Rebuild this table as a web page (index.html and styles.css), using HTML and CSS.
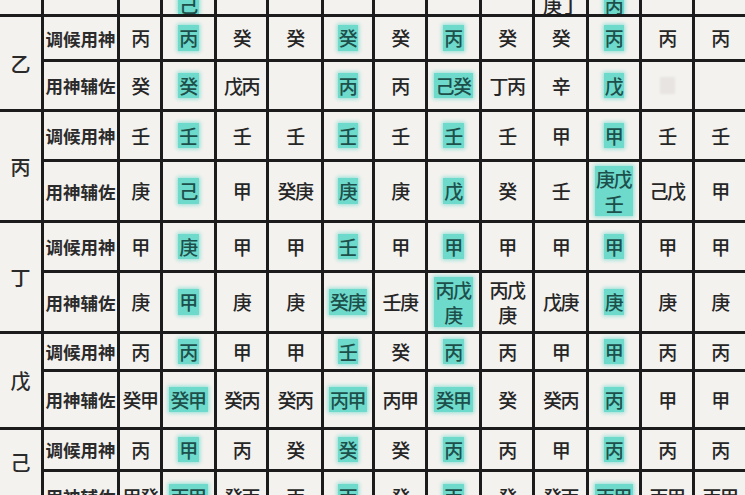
FILE: index.html
```html
<!DOCTYPE html>
<html lang="zh">
<head>
<meta charset="utf-8">
<title>调候用神表</title>
<link rel="stylesheet" href="styles.css">
</head>
<body>
<div class="table">
  <!-- 甲 (partial, cut off at top) -->
  <div class="stem r0"></div>
  <div class="label r0"></div>
  <div class="cell r0"></div>
  <div class="cell r0"><span class="hl">己</span></div>
  <div class="cell r0"></div>
  <div class="cell r0"></div>
  <div class="cell r0"></div>
  <div class="cell r0"></div>
  <div class="cell r0"></div>
  <div class="cell r0"></div>
  <div class="cell r0">庚丁</div>
  <div class="cell r0"><span class="hl">丙</span></div>
  <div class="cell r0"></div>
  <div class="cell r0"></div>

  <!-- 乙 -->
  <div class="stem">乙</div>
  <div class="label r1">调候用神</div>
  <div class="cell r1">丙</div>
  <div class="cell r1"><span class="hl">丙</span></div>
  <div class="cell r1">癸</div>
  <div class="cell r1">癸</div>
  <div class="cell r1"><span class="hl">癸</span></div>
  <div class="cell r1">癸</div>
  <div class="cell r1"><span class="hl">丙</span></div>
  <div class="cell r1">癸</div>
  <div class="cell r1">癸</div>
  <div class="cell r1"><span class="hl">丙</span></div>
  <div class="cell r1">丙</div>
  <div class="cell r1">丙</div>
  <div class="label r2">用神辅佐</div>
  <div class="cell r2">癸</div>
  <div class="cell r2"><span class="hl">癸</span></div>
  <div class="cell r2">戊丙</div>
  <div class="cell r2"></div>
  <div class="cell r2"><span class="hl">丙</span></div>
  <div class="cell r2">丙</div>
  <div class="cell r2"><span class="hl">己癸</span></div>
  <div class="cell r2">丁丙</div>
  <div class="cell r2">辛</div>
  <div class="cell r2"><span class="hl">戊</span></div>
  <div class="cell r2"><span class="ghost"></span></div>
  <div class="cell r2"></div>

  <!-- 丙 -->
  <div class="stem">丙</div>
  <div class="label r3">调候用神</div>
  <div class="cell r3">壬</div>
  <div class="cell r3"><span class="hl">壬</span></div>
  <div class="cell r3">壬</div>
  <div class="cell r3">壬</div>
  <div class="cell r3"><span class="hl">壬</span></div>
  <div class="cell r3">壬</div>
  <div class="cell r3"><span class="hl">壬</span></div>
  <div class="cell r3">壬</div>
  <div class="cell r3">甲</div>
  <div class="cell r3"><span class="hl">甲</span></div>
  <div class="cell r3">壬</div>
  <div class="cell r3">壬</div>
  <div class="label r4">用神辅佐</div>
  <div class="cell r4">庚</div>
  <div class="cell r4"><span class="hl">己</span></div>
  <div class="cell r4">甲</div>
  <div class="cell r4">癸庚</div>
  <div class="cell r4"><span class="hl">庚</span></div>
  <div class="cell r4">庚</div>
  <div class="cell r4"><span class="hl">戊</span></div>
  <div class="cell r4">癸</div>
  <div class="cell r4">壬</div>
  <div class="cell r4"><span class="hl">庚戊<br>壬</span></div>
  <div class="cell r4">己戊</div>
  <div class="cell r4">甲</div>

  <!-- 丁 -->
  <div class="stem">丁</div>
  <div class="label r5">调候用神</div>
  <div class="cell r5">甲</div>
  <div class="cell r5"><span class="hl">庚</span></div>
  <div class="cell r5">甲</div>
  <div class="cell r5">甲</div>
  <div class="cell r5"><span class="hl">壬</span></div>
  <div class="cell r5">甲</div>
  <div class="cell r5"><span class="hl">甲</span></div>
  <div class="cell r5">甲</div>
  <div class="cell r5">甲</div>
  <div class="cell r5"><span class="hl">甲</span></div>
  <div class="cell r5">甲</div>
  <div class="cell r5">甲</div>
  <div class="label r6">用神辅佐</div>
  <div class="cell r6">庚</div>
  <div class="cell r6"><span class="hl">甲</span></div>
  <div class="cell r6">庚</div>
  <div class="cell r6">庚</div>
  <div class="cell r6"><span class="hl">癸庚</span></div>
  <div class="cell r6">壬庚</div>
  <div class="cell r6"><span class="hl">丙戊<br>庚</span></div>
  <div class="cell r6">丙戊<br>庚</div>
  <div class="cell r6">戊庚</div>
  <div class="cell r6"><span class="hl">庚</span></div>
  <div class="cell r6">庚</div>
  <div class="cell r6">庚</div>

  <!-- 戊 -->
  <div class="stem">戊</div>
  <div class="label r7">调候用神</div>
  <div class="cell r7">丙</div>
  <div class="cell r7"><span class="hl">丙</span></div>
  <div class="cell r7">甲</div>
  <div class="cell r7">甲</div>
  <div class="cell r7"><span class="hl">壬</span></div>
  <div class="cell r7">癸</div>
  <div class="cell r7"><span class="hl">丙</span></div>
  <div class="cell r7">丙</div>
  <div class="cell r7">甲</div>
  <div class="cell r7"><span class="hl">甲</span></div>
  <div class="cell r7">丙</div>
  <div class="cell r7">丙</div>
  <div class="label r8">用神辅佐</div>
  <div class="cell r8">癸甲</div>
  <div class="cell r8"><span class="hl">癸甲</span></div>
  <div class="cell r8">癸丙</div>
  <div class="cell r8">癸丙</div>
  <div class="cell r8"><span class="hl">丙甲</span></div>
  <div class="cell r8">丙甲</div>
  <div class="cell r8"><span class="hl">癸甲</span></div>
  <div class="cell r8">癸</div>
  <div class="cell r8">癸丙</div>
  <div class="cell r8"><span class="hl">丙</span></div>
  <div class="cell r8">甲</div>
  <div class="cell r8">甲</div>

  <!-- 己 -->
  <div class="stem">己</div>
  <div class="label r9">调候用神</div>
  <div class="cell r9">丙</div>
  <div class="cell r9"><span class="hl">甲</span></div>
  <div class="cell r9">丙</div>
  <div class="cell r9">癸</div>
  <div class="cell r9"><span class="hl">癸</span></div>
  <div class="cell r9">癸</div>
  <div class="cell r9"><span class="hl">丙</span></div>
  <div class="cell r9">丙</div>
  <div class="cell r9">甲</div>
  <div class="cell r9"><span class="hl">丙</span></div>
  <div class="cell r9">丙</div>
  <div class="cell r9">丙</div>
  <div class="label r10">用神辅佐</div>
  <div class="cell r10">甲癸</div>
  <div class="cell r10"><span class="hl">丙甲</span></div>
  <div class="cell r10">癸丙</div>
  <div class="cell r10">丙</div>
  <div class="cell r10"><span class="hl">丙</span></div>
  <div class="cell r10">癸</div>
  <div class="cell r10"><span class="hl">丙</span></div>
  <div class="cell r10">癸</div>
  <div class="cell r10">癸丙</div>
  <div class="cell r10"><span class="hl">丙甲</span></div>
  <div class="cell r10">丙甲</div>
  <div class="cell r10">丙甲</div>
</div>
</body>
</html>
```
FILE: styles.css
```css
html, body {
  margin: 0;
  padding: 0;
  background: #f3f1ee;
  overflow: hidden;
}

body {
  width: 745px;
  height: 495px;
  font-family: "Noto Sans CJK SC", "Noto Sans CJK TC", sans-serif;
  color: #262626;
}

.table {
  display: grid;
  grid-template-columns: 41px 73px 40px 51px 49px 52px 48px 50px 51px 50px 51px 50px 50px 50px;
  grid-template-rows: 14px 42px 47px 47px 58px 47px 58px 35px 55px 39px 23px;
  gap: 3px;
  background: #1c1c1c;
  width: 745px;
  height: 495px;
  overflow: hidden;
}

.stem,
.label,
.cell {
  background: #f4f2ef;
  display: flex;
  align-items: center;
  justify-content: center;
  text-align: center;
  overflow: hidden;
}

.stem {
  grid-row: span 2;
  font-size: 20px;
  font-weight: 500;
  color: #2a2a2a;
}

.stem.r0 {
  grid-row: span 1;
}

.label {
  font-size: 17.5px;
  font-weight: 700;
  color: #2b2b2b;
  white-space: nowrap;
}

.cell {
  font-size: 19px;
  font-weight: 500;
  line-height: 1.32;
  white-space: nowrap;
  letter-spacing: -1.5px;
}

.r0 {
  align-items: flex-end;
}

.cell.r0 {
  line-height: 1;
}

.r10 {
  align-items: flex-start;
  padding-top: 12px;
}

.hl {
  background: #6edacc;
  color: #1d504b;
  padding: 0 2px 0 1px;
  box-shadow: 0 0 4px 1px rgba(110, 218, 204, 0.75);
  -webkit-box-decoration-break: clone;
  box-decoration-break: clone;
}

.ghost {
  display: block;
  width: 15px;
  height: 17px;
  background: #e7e4e1;
  filter: blur(1px);
}
```
